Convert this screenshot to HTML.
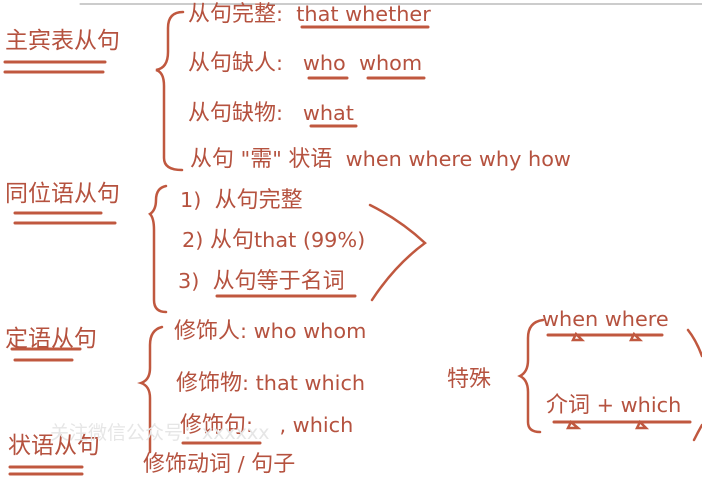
<!DOCTYPE html>
<html><head><meta charset="utf-8"><style>
body{margin:0;width:702px;height:477px;background:#fff;overflow:hidden;position:relative;font-family:"DejaVu Sans","Noto Sans CJK SC",sans-serif;color:#b5523f}
.t{position:absolute;white-space:nowrap;font-size:22px;line-height:26px}
.t span{font-size:20.8px}
.b{font-size:23px}
svg{position:absolute;left:0;top:0}
</style></head><body>
<svg width="702" height="477" fill="none" stroke="#c0583f" stroke-linecap="round">
<line x1="80" y1="4" x2="702" y2="4" stroke="#999" stroke-width="1"/>
<g stroke-width="3">
<line x1="5" y1="62" x2="105" y2="62"/><line x1="5" y1="72" x2="103" y2="72"/>
<line x1="302" y1="27" x2="428" y2="27"/>
<line x1="309" y1="78" x2="347" y2="78"/><line x1="368" y1="78" x2="424" y2="78"/>
<line x1="311" y1="126" x2="356" y2="126"/>
<line x1="15" y1="213" x2="101" y2="213"/><line x1="15" y1="223" x2="115" y2="223"/>
<line x1="217" y1="296" x2="355" y2="296"/>
<line x1="12" y1="349" x2="80" y2="349"/><line x1="15" y1="360" x2="72" y2="360"/>
<line x1="183" y1="443" x2="260" y2="443"/>
<line x1="10" y1="467" x2="82" y2="467"/><line x1="10" y1="474" x2="82" y2="474"/>
<line x1="548" y1="335" x2="662" y2="335"/>
<line x1="554" y1="422" x2="690" y2="422"/>
</g>
<g stroke-width="2.5">
<path d="M183 12 Q168 12 168 28 L168 52 Q168 68 156 70 Q164 72 164 86 L164 158 Q164 170 182 170"/>
<path d="M166 186 Q156 188 156 200 Q156 210 150 214 Q154 218 154 230 L154 300 Q154 312 166 312"/>
<path d="M370 205 Q400 220 425 243 Q395 265 372 300"/>
<path d="M162 327 Q150 330 150 345 L150 368 Q150 380 141 383 Q150 386 150 398 L150 452"/>
<path d="M543 320 Q528 322 528 338 L528 360 Q528 372 520 376 Q528 380 528 392 L528 422 Q528 432 540 432"/>
<path d="M688 330 Q696 340 702 356"/>
<path d="M694 440 Q698 432 702 425"/>
<path d="M573 340 L576 334 L582 340 Z M631 340 L634 334 L640 340 Z M568 428 L571 422 L578 428 Z M637 428 L640 422 L646 428 Z"/>
</g>
</svg>
<div class="t b" style="left:5px;top:28px">主宾表从句</div>
<div class="t" style="left:188px;top:1px">从句完整<span>:&nbsp; that whether</span></div>
<div class="t" style="left:188px;top:50px">从句缺人<span>:&nbsp;&nbsp; who&nbsp; whom</span></div>
<div class="t" style="left:188px;top:100px">从句缺物<span>:&nbsp;&nbsp; what</span></div>
<div class="t" style="left:190px;top:146px">从句<span> "</span>需<span>" </span>状语<span>&nbsp; when where why how</span></div>
<div class="t b" style="left:5px;top:181px">同位语从句</div>
<div class="t" style="left:180px;top:187px"><span>1)&nbsp; </span>从句完整</div>
<div class="t" style="left:182px;top:227px"><span>2) </span>从句<span>that (99%)</span></div>
<div class="t" style="left:178px;top:268px"><span>3)&nbsp; </span>从句等于名词</div>
<div class="t b" style="left:5px;top:326px">定语从句</div>
<div class="t" style="left:174px;top:318px">修饰人<span>: who whom</span></div>
<div class="t" style="left:176px;top:370px">修饰物<span>: that which</span></div>
<div class="t" style="left:180px;top:412px">修饰句<span>:&nbsp;&nbsp;&nbsp;&nbsp;, which</span></div>
<div class="t b" style="left:8px;top:433px">状语从句</div>
<div class="t" style="left:143px;top:451px">修饰动词<span> / </span>句子</div>
<div class="t" style="left:447px;top:367px">特殊</div>
<div class="t" style="left:542px;top:306px"><span>when where</span></div>
<div class="t" style="left:546px;top:392px">介词<span> + which</span></div>
<div class="t" style="left:50px;top:420px;color:#e6e6e6;font-size:19px">关注微信公众号：xxxxxx</div>
</body></html>
